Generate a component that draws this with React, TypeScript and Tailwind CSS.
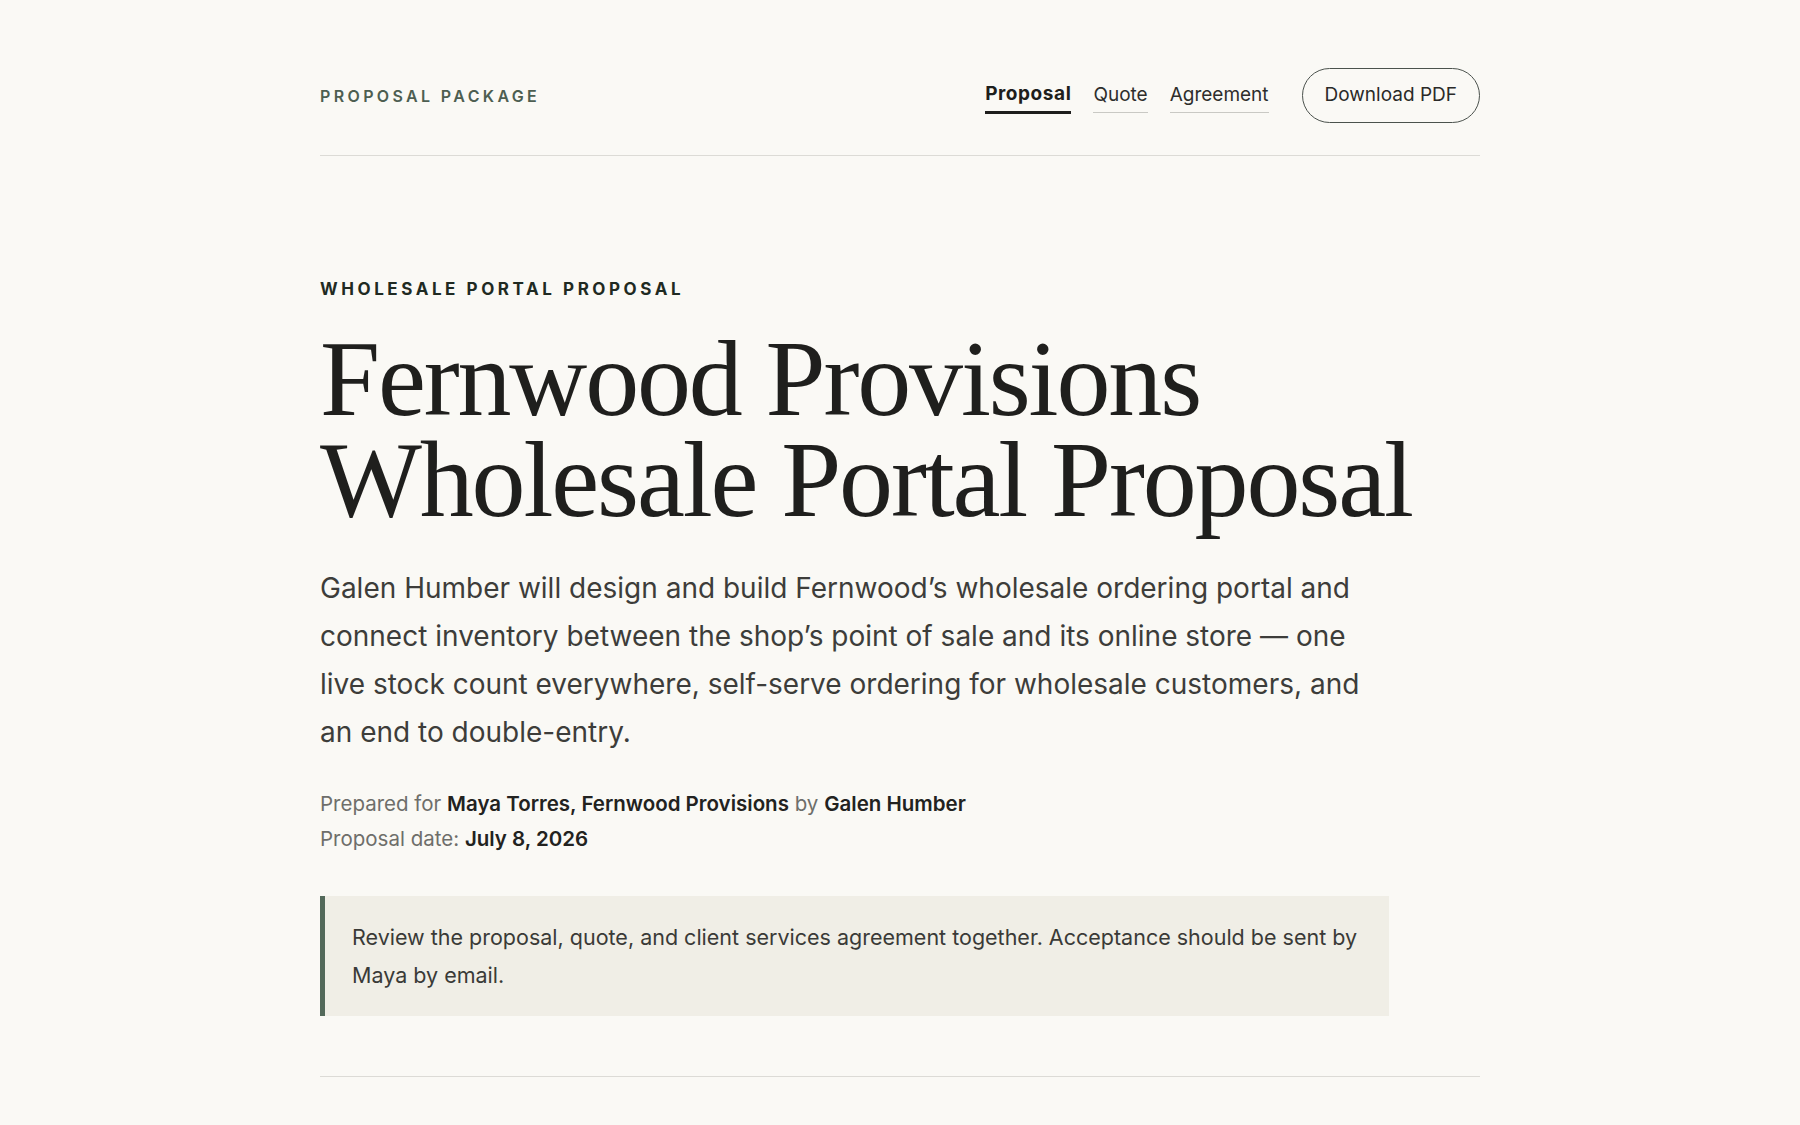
import React from 'react';

const navItems = [
  { label: 'Proposal', active: true },
  { label: 'Quote', active: false },
  { label: 'Agreement', active: false },
];

const sans = "font-['Inter','Noto_Sans',sans-serif]";

const App: React.FC = () => {
  return (
    <div className={`min-h-screen bg-[#faf9f5] text-[#222220] ${sans}`}>
      <div className="mx-auto w-[1160px]">
        <header className="flex items-center justify-between border-b border-[#dcdbd6] pt-[68px] pb-[32px]">
          <span className="text-[16px] font-semibold uppercase tracking-[0.21em] text-[#4d5e51]">
            Proposal Package
          </span>
          <div className="flex items-center">
            <nav className="flex items-center gap-[22px]">
              {navItems.map((item) => (
                <a
                  key={item.label}
                  href="#"
                  className={
                    item.active
                      ? 'border-b-[3px] border-[#1e1e1c] pb-[2px] pt-[3px] text-[19px] font-bold tracking-[0.03em] text-[#1e1e1c]'
                      : 'border-b border-[#c9c9c4] pb-[3px] pt-[3px] text-[19px] text-[#2e2e2c]'
                  }
                >
                  {item.label}
                </a>
              ))}
            </nav>
            <button className="ml-[33px] h-[55px] rounded-full border-[1.5px] border-[#4b524d] px-[22px] text-[19px] text-[#2a2a28]">
              Download PDF
            </button>
          </div>
        </header>

        <section className="pt-[121px] pb-[60px]">
          <p className="text-[17px] font-bold uppercase leading-6 tracking-[0.21em] text-[#1f2a22]">
            Wholesale Portal Proposal
          </p>
          <h1 className="mt-[27px] font-['Liberation_Serif','Times_New_Roman',serif] text-[108px] leading-[101px] tracking-[-0.02em] text-[#1f1f1d]">
            Fernwood Provisions
            <br />
            Wholesale Portal Proposal
          </h1>
          <p className="mt-[34px] max-w-[1060px] text-[28px] leading-[48px] text-[#3d3d3a]">
            Galen Humber will design and build Fernwood’s wholesale ordering portal and connect
            inventory between the shop’s point of sale and its online store — one live stock count
            everywhere, self-serve ordering for wholesale customers, and an end to double-entry.
          </p>
          <div className="mt-[30px] text-[20.5px] leading-[35px] text-[#6e6e6a]">
            <p>
              Prepared for <strong className="font-semibold text-[#222220]">Maya Torres, Fernwood Provisions</strong> by{' '}
              <strong className="font-semibold text-[#222220]">Galen Humber</strong>
            </p>
            <p>
              Proposal date: <strong className="font-semibold text-[#222220]">July 8, 2026</strong>
            </p>
          </div>
          <div className="mt-[40px] w-[1069px] border-l-[5px] border-[#53695a] bg-[#f0eee6] py-[22px] pl-[27px] pr-[24px]">
            <p className="text-[21.5px] leading-[38px] text-[#3a3a37]">
              Review the proposal, quote, and client services agreement together. Acceptance should
              be sent by Maya by email.
            </p>
          </div>
        </section>
        <div className="border-b border-[#dcdbd6]" />
      </div>
    </div>
  );
};

export default App;
